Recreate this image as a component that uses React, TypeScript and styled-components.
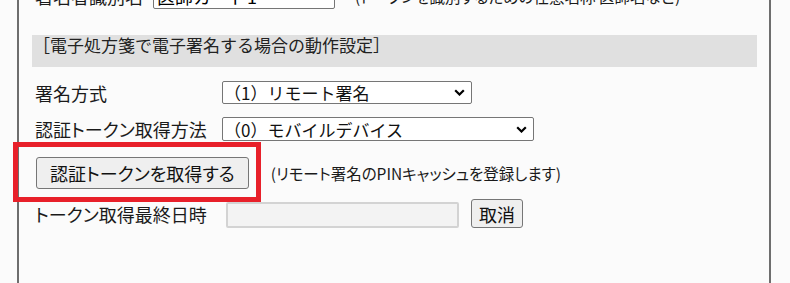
import styled, { createGlobalStyle } from "styled-components";

const GlobalStyle = createGlobalStyle`
  body {
    margin: 0;
    background: #fbfbfb;
    font-family: "Noto Sans CJK JP", "Noto Sans", sans-serif;
    color: #1a1a1a;
    overflow: hidden;
  }
`;

const Panel = styled.div`
  margin: -17px 19px 0 17px;
  height: 300px;
  box-sizing: border-box;
  border-left: 2px solid #6e6e6e;
  border-right: 2px solid #6e6e6e;
  padding: 0 12px 0 13px;
  display: flex;
  flex-direction: column;
`;

const Row = styled.div<{ $top: number; $height: number }>`
  display: flex;
  align-items: center;
  margin-top: ${(p) => p.$top}px;
  height: ${(p) => p.$height}px;
  padding-left: 3px;
`;

const Label = styled.div<{ $width: number }>`
  width: ${(p) => p.$width}px;
  flex-shrink: 0;
  font-size: 18px;
  font-feature-settings: "palt";
  white-space: nowrap;
`;

const TextInput = styled.div<{ $width: number; $disabled?: boolean }>`
  width: ${(p) => p.$width}px;
  height: 26px;
  box-sizing: border-box;
  border: ${(p) => (p.$disabled ? "2px solid #d3d3d3" : "1px solid #767676")};
  border-radius: 2px;
  background: ${(p) => (p.$disabled ? "#f3f3f3" : "#fff")};
  font-size: 18px;
  line-height: 24px;
  padding-left: 3px;
  color: #000;
`;

const Hint = styled.span<{ $gap: number }>`
  margin-left: ${(p) => p.$gap}px;
  font-size: 15.5px;
  font-feature-settings: "palt";
  white-space: nowrap;
  color: #1a1a1a;
`;

const SectionBar = styled.div`
  margin-top: 26px;
  height: 32px;
  box-sizing: border-box;
  background: #e0e0e0;
  font-size: 17px;
  line-height: 20px;
  padding-left: 1px;
  color: #222;
`;

const SelectBox = styled.div<{ $width: number; $height: number }>`
  display: flex;
  align-items: center;
  justify-content: space-between;
  width: ${(p) => p.$width}px;
  height: ${(p) => p.$height}px;
  box-sizing: border-box;
  border: 1px solid #767676;
  border-radius: 2px;
  background: #fff;
  font-size: 17px;
  padding: 0 6px 0 1px;
  color: #111;
`;

const Highlight = styled.span`
  position: relative;
  display: inline-flex;
  &::after {
    content: "";
    position: absolute;
    left: -23px;
    top: -15px;
    right: -12px;
    bottom: -13px;
    border: 5px solid #e8202a;
    pointer-events: none;
  }
`;

const Button = styled.button<{ $height: number; $pad: number }>`
  height: ${(p) => p.$height}px;
  box-sizing: border-box;
  border: 1px solid #767676;
  border-radius: 3px;
  background: #efefef;
  font-family: inherit;
  font-size: 18px;
  font-feature-settings: "palt";
  color: #111;
  padding: 0 ${(p) => p.$pad}px;
  white-space: nowrap;
`;

const Spacer = styled.div<{ $w: number }>`
  width: ${(p) => p.$w}px;
  flex-shrink: 0;
`;

const Chevron = () => (
  <svg width="11" height="7" viewBox="0 0 11 7">
    <path d="M1.2 1.2 L5.5 5.5 L9.8 1.2" fill="none" stroke="#000" strokeWidth="2.2" />
  </svg>
);

export default function App() {
  return (
    <>
      <GlobalStyle />
      <Panel>
        <Row $top={0} $height={26}>
          <Label $width={118}>署名者識別名</Label>
          <TextInput $width={182}>医師カード1</TextInput>
          <Hint $gap={20}>(トークンを識別するための任意名称 医師名など)</Hint>
        </Row>

        <SectionBar>［電子処方箋で電子署名する場合の動作設定］</SectionBar>

        <Row $top={14} $height={23}>
          <Label $width={187}>署名方式</Label>
          <SelectBox $width={250} $height={23}>
            <span>（1）リモート署名</span>
            <Chevron />
          </SelectBox>
        </Row>

        <Row $top={13} $height={24}>
          <Label $width={187}>認証トークン取得方法</Label>
          <SelectBox $width={312} $height={24}>
            <span>（0）モバイルデバイス</span>
            <Chevron />
          </SelectBox>
        </Row>

        <Row $top={16} $height={32}>
          <Spacer $w={1} />
          <Highlight>
            <Button $height={32} $pad={13}>認証トークンを取得する</Button>
          </Highlight>
          <Hint $gap={22}>(リモート署名のPINキャッシュを登録します)</Hint>
        </Row>

        <Row $top={10} $height={29} style={{ alignItems: "flex-end" }}>
          <Label $width={191} style={{ alignSelf: "center" }}>
            トークン取得最終日時
          </Label>
          <TextInput $width={233} $disabled />
          <Spacer $w={12} />
          <Button $height={29} $pad={7}>取消</Button>
        </Row>
      </Panel>
    </>
  );
}
